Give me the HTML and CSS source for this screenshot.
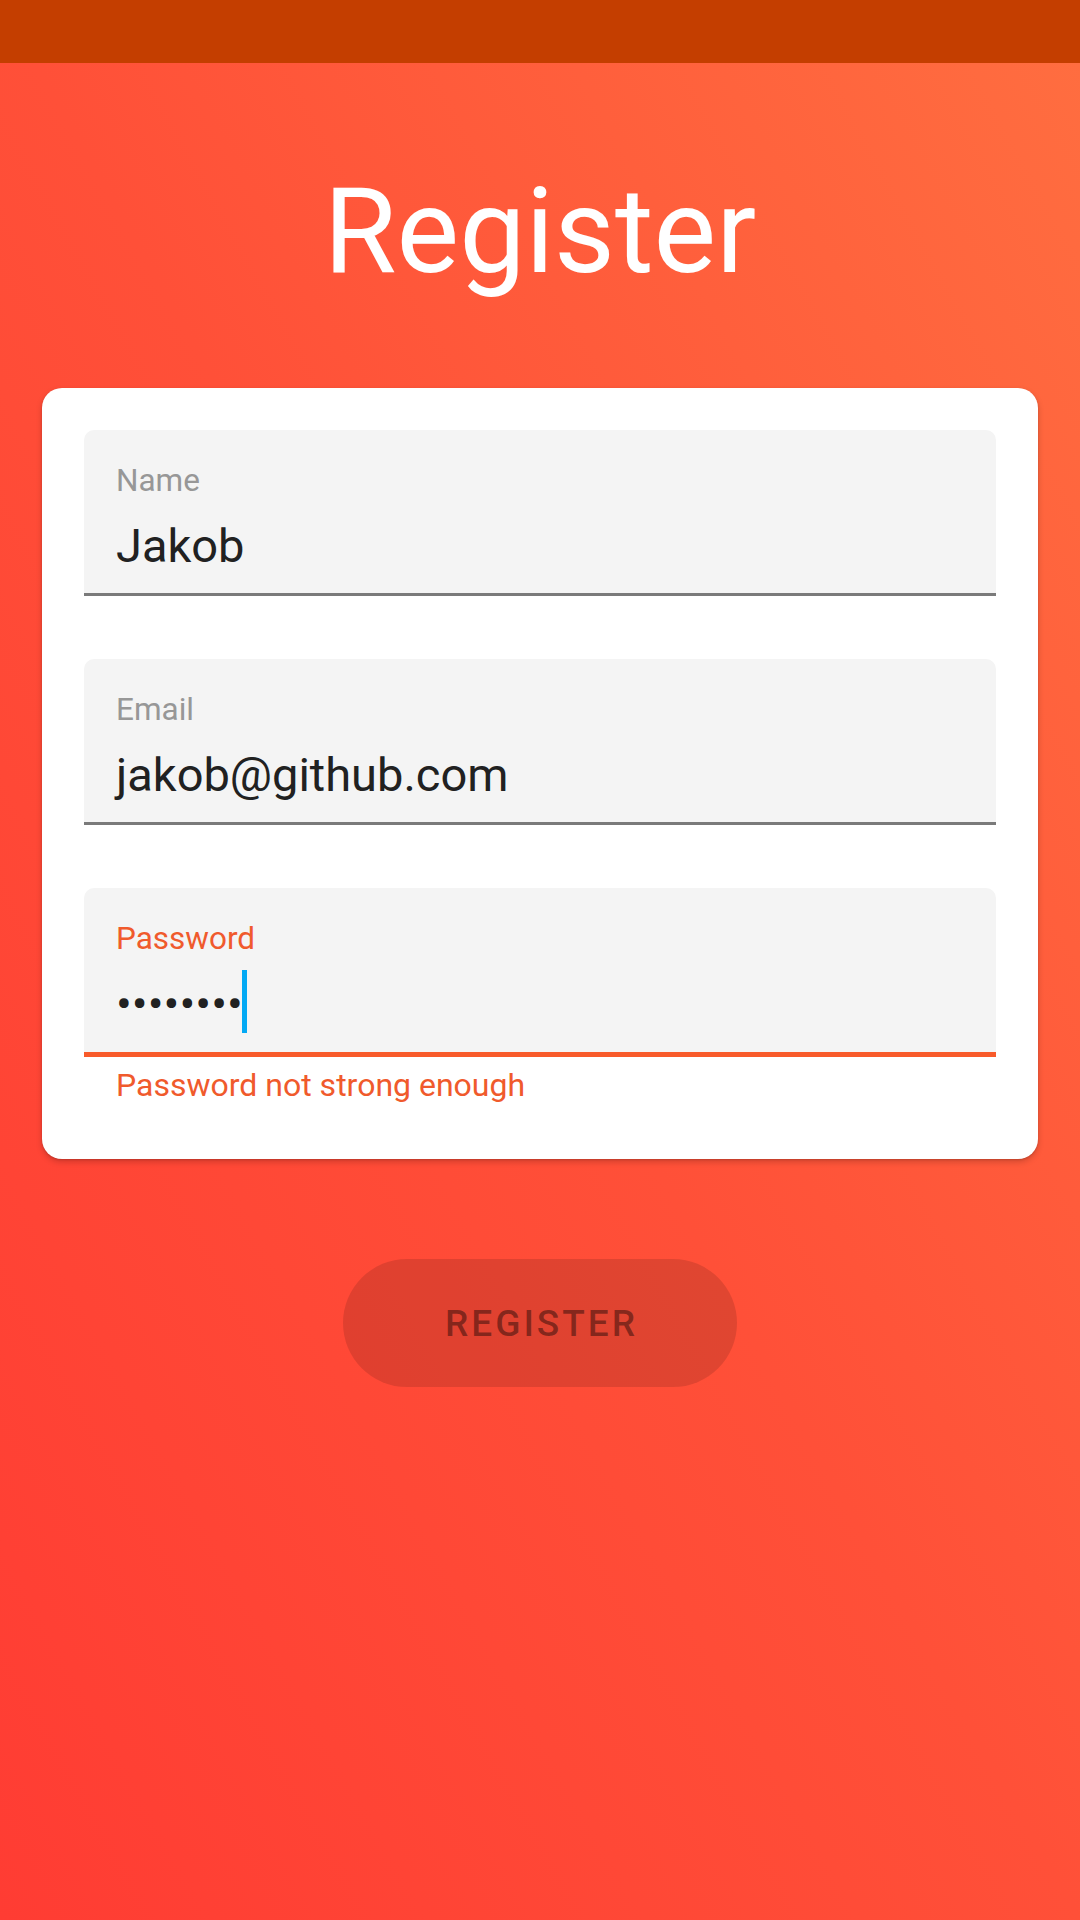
FILE: index.html
```html
<!DOCTYPE html>
<html lang="en">
<head>
<meta charset="utf-8">
<title>Register</title>
<link rel="stylesheet" href="styles.css">
</head>
<body>
<div class="screen">
  <div class="status-bar"></div>
  <h1 class="title">Register</h1>
  <form class="card">
    <div class="field-block">
      <div class="field">
        <div class="label">Name</div>
        <div class="value">Jakob</div>
      </div>
      <div class="helper"></div>
    </div>
    <div class="field-block">
      <div class="field">
        <div class="label">Email</div>
        <div class="value">jakob@github.com</div>
      </div>
      <div class="helper"></div>
    </div>
    <div class="field-block">
      <div class="field field-error">
        <div class="label">Password</div>
        <div class="value"><span class="dots">••••••••</span><span class="cursor"></span></div>
      </div>
      <div class="helper error-text">Password not strong enough</div>
    </div>
  </form>
  <div class="actions">
    <button type="button" class="btn-register" disabled>REGISTER</button>
  </div>
</div>
</body>
</html>
```

FILE: styles.css
```css
html, body {
  margin: 0;
  padding: 0;
}

body {
  width: 1080px;
  height: 1920px;
  overflow: hidden;
  font-family: Roboto, "Noto Sans", "Liberation Sans", sans-serif;
}

.screen {
  width: 1080px;
  height: 1920px;
  display: flex;
  flex-direction: column;
  background: linear-gradient(to top right, #ff3c33 0%, #ff5038 50%, #ff6e40 100%);
}

.status-bar {
  height: 63px;
  flex: 0 0 63px;
  background: #c43e00;
}

.title {
  margin: 110px 0 0;
  font-size: 118px;
  line-height: 118px;
  font-weight: 400;
  color: #ffffff;
  text-align: center;
}

.card {
  margin: 97px 42px 0;
  padding: 42px;
  background: #ffffff;
  border-radius: 20px;
  box-shadow: 0 3px 6px rgba(0, 0, 0, 0.18), 0 1px 2px rgba(0, 0, 0, 0.12);
  display: flex;
  flex-direction: column;
}

.field-block {
  height: 229px;
  display: flex;
  flex-direction: column;
}

.field {
  box-sizing: border-box;
  height: 166px;
  padding: 32px 32px 0;
  background: #f4f4f4;
  border-radius: 10px 10px 0 0;
  border-bottom: 3px solid #7a7a7a;
}

.field-error {
  height: 169px;
  border-bottom: 5px solid #f85a2a;
}

.label {
  font-size: 31.5px;
  line-height: 37px;
  color: #979797;
}

.field-error .label {
  color: #f05a2c;
}

.value {
  margin-top: 19px;
  height: 55px;
  font-size: 47px;
  line-height: 55px;
  color: #212121;
  white-space: nowrap;
}

.dots {
  letter-spacing: 0;
}

.cursor {
  display: inline-block;
  width: 5px;
  height: 63px;
  margin-top: -30px;
  margin-left: -1px;
  vertical-align: -13px;
  background: #03a9f4;
}

.helper {
  padding: 10px 32px 0;
  font-size: 32px;
  line-height: 37px;
}

.error-text {
  color: #f05a2c;
}

.actions {
  display: flex;
  justify-content: center;
  margin-top: 100px;
}

.btn-register {
  width: 394px;
  height: 128px;
  border: none;
  border-radius: 64px;
  background: rgba(0, 0, 0, 0.12);
  color: rgba(0, 0, 0, 0.42);
  font-family: Roboto, "Noto Sans", "Liberation Sans", sans-serif;
  font-size: 37px;
  font-weight: 500;
  letter-spacing: 3px;
  padding: 0 0 0 3px;
  cursor: default;
}
```
